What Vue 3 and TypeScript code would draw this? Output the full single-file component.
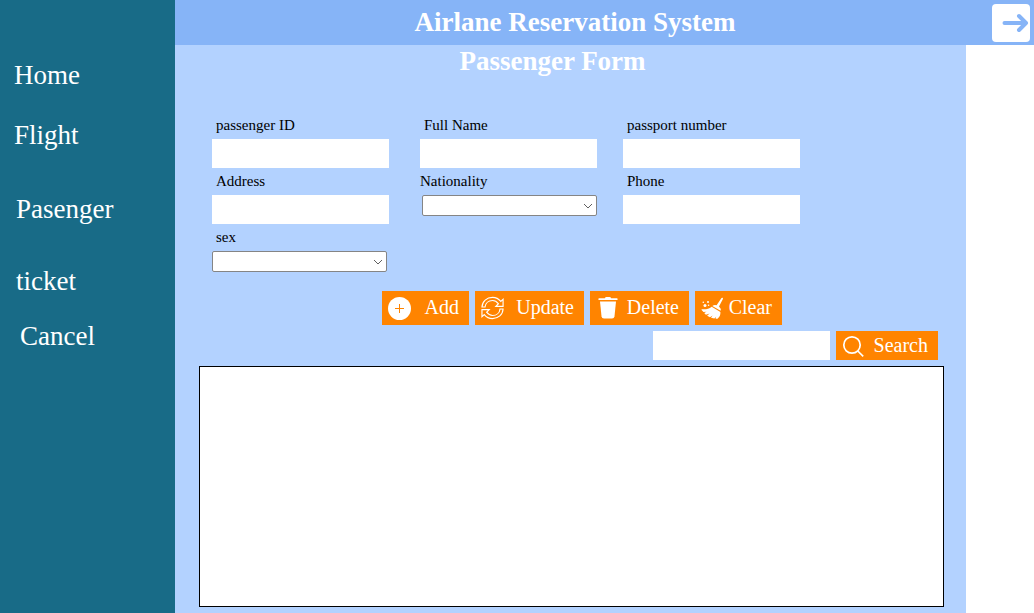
<script setup lang="ts">
import { reactive, ref } from 'vue'

interface Field {
  id: string
  label: string
  kind: 'text' | 'select'
  options?: string[]
}

const navGroups: { name: string; items: string[] }[] = [
  { name: 'main', items: ['Home', 'Flight'] },
  { name: 'booking', items: ['Pasenger', 'ticket'] },
  { name: 'exit', items: ['Cancel'] },
]

const columns: Field[][] = [
  [
    { id: 'passengerId', label: 'passenger ID', kind: 'text' },
    { id: 'address', label: 'Address', kind: 'text' },
    { id: 'sex', label: 'sex', kind: 'select', options: ['Male', 'Female'] },
  ],
  [
    { id: 'fullName', label: 'Full Name', kind: 'text' },
    { id: 'nationality', label: 'Nationality', kind: 'select', options: [] },
  ],
  [
    { id: 'passport', label: 'passport number', kind: 'text' },
    { id: 'phone', label: 'Phone', kind: 'text' },
  ],
]

const form = reactive<Record<string, string>>({
  passengerId: '',
  address: '',
  sex: '',
  fullName: '',
  nationality: '',
  passport: '',
  phone: '',
})
const query = ref('')

function clearForm(): void {
  Object.keys(form).forEach((key) => (form[key] = ''))
}
</script>

<template>
  <div class="page">
    <nav class="sidebar" aria-label="Main">
      <div v-for="group in navGroups" :key="group.name" class="nav-group" :class="group.name">
        <a v-for="item in group.items" :key="item" href="#">{{ item }}</a>
      </div>
    </nav>

    <div class="content">
      <header class="topbar">
        <h1>Airlane Reservation System</h1>
        <button type="button" class="leave" aria-label="Leave">
          <svg viewBox="0 0 38 38" width="38" height="38" fill="none" stroke="#86b4f7" stroke-width="4" stroke-linecap="round" stroke-linejoin="round">
            <path d="M12.5 19H34M27 12l7 7-7 7" />
          </svg>
        </button>
      </header>

      <main class="panel">
        <h2>Passenger Form</h2>

        <form class="fields" @submit.prevent>
          <div v-for="(column, index) in columns" :key="index" class="column">
            <div v-for="field in column" :key="field.id" class="field" :class="field.id">
              <label :for="field.id">{{ field.label }}</label>
              <input v-if="field.kind === 'text'" :id="field.id" v-model="form[field.id]" type="text" />
              <select v-else :id="field.id" v-model="form[field.id]">
                <option value=""></option>
                <option v-for="option in field.options" :key="option">{{ option }}</option>
              </select>
            </div>
          </div>
        </form>

        <div class="actions">
          <button type="button" class="action add">
            <svg viewBox="0 0 24 24" width="24" height="24">
              <circle cx="11.500" cy="12.500" r="11.500" fill="#fff" />
              <path d="M11.500 8v9M7 12.500h9" stroke="#ff8400" stroke-width="1" />
            </svg>
            <span>Add</span>
          </button>
          <button type="button" class="action update">
            <svg viewBox="0 0 25 24" width="24" height="24" fill="none" stroke="#fff" stroke-width="1.200">
              <path d="M1 11C1.300 5 6 1 12 1c3.500 0 6.500 1.500 8.600 4.200L23 3v7.300h-7.500l2.700-2.700C16.600 5.500 14.500 4.200 12 4.200c-4.200 0-7.400 2.800-7.800 6.800z" />
              <path d="M23 13c-.3 6-5 10-11 10-3.500 0-6.500-1.500-8.600-4.200L1 21v-7.300h7.500l-2.700 2.700c1.600 2.100 3.700 3.400 6.200 3.400 4.200 0 7.400-2.800 7.800-6.800z" />
            </svg>
            <span>Update</span>
          </button>
          <button type="button" class="action delete">
            <svg viewBox="0 0 24 24" width="24" height="24" fill="#fff">
              <path d="M3 2.300h5.800Q9.300 1 10.500 1h3q1.200 0 1.700 1.300H21q.6 0 .6.900t-.6.900H3q-.6 0-.6-.9t.6-.9z" />
              <path d="M4 5.500h16l-1.500 14.700q-.3 2.300-2.500 2.300H8q-2.200 0-2.500-2.300z" />
            </svg>
            <span>Delete</span>
          </button>
          <button type="button" class="action clear" @click="clearForm">
            <svg viewBox="0 0 24 24" width="24" height="24" fill="#fff">
              <path d="M20.300 2.200q.5-.8 1.200-.4.800.4.400 1.200L18 10.500q2.200 1.900 1.600 4.300L11.300 9.900q2-1.500 4.300-.7z" />
              <path d="M10.700 10.700l8.700 5.200c.3 2.900-.8 5.300-3.300 7l-1.700-.6.9-1.800-1.900 1.900-3.400-.7 1.600-2.100-2.600 1.700-2.900-1.500 2.500-2.300-3.700 1.200-1.700-1.700 2.300-1.200-3 .1L.6 14v-.8c4.200.5 7.200-.3 10.100-2.500z" />
              <circle cx="4" cy="9.600" r="1.500" />
              <circle cx="7" cy="6" r="1" />
              <circle cx="2.300" cy="6.200" r=".8" />
              <circle cx="7.600" cy="9.300" r=".8" />
            </svg>
            <span>Clear</span>
          </button>
        </div>

        <form class="search" @submit.prevent>
          <input v-model="query" type="text" aria-label="Search passengers" />
          <button type="submit" class="action find">
            <svg viewBox="0 0 24 24" width="24" height="24" fill="none" stroke="#fff" stroke-width="1.700">
              <circle cx="10" cy="11" r="8.200" />
              <path d="M15.800 17l5.400 5.300" />
            </svg>
            <span>Search</span>
          </button>
        </form>

        <section class="results" aria-label="Passengers"></section>
      </main>
    </div>
  </div>
</template>

<style>
body {
  margin: 0;
  background: #fff;
}
</style>

<style scoped>
.page {
  display: flex;
  min-height: 100vh;
  font-family: "Liberation Serif", "Times New Roman", serif;
}

.page * {
  box-sizing: border-box;
}

.sidebar {
  display: flex;
  flex-direction: column;
  flex: 0 0 175px;
  padding-top: 59px;
  background: #186b87;
}

.nav-group {
  display: flex;
  flex-direction: column;
  align-items: flex-start;
  gap: 28px;
  padding-left: 14px;
}

.nav-group a {
  color: #fff;
  font-size: 27px;
  line-height: 32px;
  text-decoration: none;
}

.nav-group.booking {
  gap: 40px;
  margin: 42px 0 23px;
  padding-left: 16px;
}

.nav-group.exit {
  padding-left: 20px;
}

.content {
  display: flex;
  flex: 1;
  flex-direction: column;
  min-width: 0;
}

.topbar {
  display: flex;
  align-items: center;
  height: 45px;
  padding-right: 4px;
  background: #86b4f7;
}

h1,
h2 {
  margin: 0;
  color: #fff;
  font-size: 27px;
  line-height: 32px;
  text-align: center;
}

h1 {
  flex: 1;
  padding: 0 17px 2px 0;
}

.leave {
  width: 38px;
  height: 38px;
  padding: 0;
  border: 0;
  border-radius: 4px;
  background: #fff;
}

.leave svg {
  display: block;
}

.panel {
  display: flex;
  flex: 1;
  flex-direction: column;
  margin-right: 68px;
  padding: 0 22px 6px 24px;
  background: #b3d2ff;
}

h2 {
  padding-right: 38px;
}

.fields {
  display: flex;
  gap: 26px;
  margin-top: 36px;
  padding-left: 13px;
}

.column {
  display: flex;
  flex-direction: column;
  width: 177px;
}

.column:first-child {
  margin-right: 5px;
}

.field {
  display: flex;
  flex-direction: column;
  height: 56px;
}

.field label {
  padding: 0 0 2px 4px;
  color: #000;
  font-size: 15px;
  line-height: 24px;
}

.field input,
.search input {
  width: 177px;
  height: 29px;
  padding: 0 6px;
  border: 0;
  background: #fff;
  font: 16px "Liberation Serif", serif;
}

.field select {
  width: 175px;
  height: 21px;
  padding: 0 22px 0 4px;
  border: 1px solid #858585;
  border-radius: 2px;
  appearance: none;
  background: #fff url("data:image/svg+xml,%3Csvg xmlns='http://www.w3.org/2000/svg' width='10' height='6'%3E%3Cpath d='M1 1l4 4 4-4' fill='none' stroke='%23606060'/%3E%3C/svg%3E") no-repeat right 3px center;
  font: 14px "Liberation Serif", serif;
}

.nationality label {
  padding-left: 0;
}

.nationality select {
  align-self: flex-end;
}

.actions {
  display: flex;
  gap: 6px;
  margin-top: 10px;
  padding-left: 183px;
}

.action {
  display: flex;
  align-items: center;
  justify-content: space-between;
  height: 34px;
  padding: 0 10px 0 6px;
  border: 0;
  background: #ff8400;
  color: #fff;
  font: 20px "Liberation Serif", "Times New Roman", serif;
}

.actions span {
  padding-bottom: 2px;
}

.add,
.clear {
  width: 87px;
}

.update {
  width: 109px;
}

.delete {
  width: 99px;
}

.search {
  display: flex;
  justify-content: flex-end;
  gap: 6px;
  margin: 6px 0;
  padding-right: 6px;
}

.find {
  width: 102px;
  height: 29px;
}

.results {
  flex: 1;
  min-height: 160px;
  border: 1px solid #000;
  background: #fff;
}
</style>
